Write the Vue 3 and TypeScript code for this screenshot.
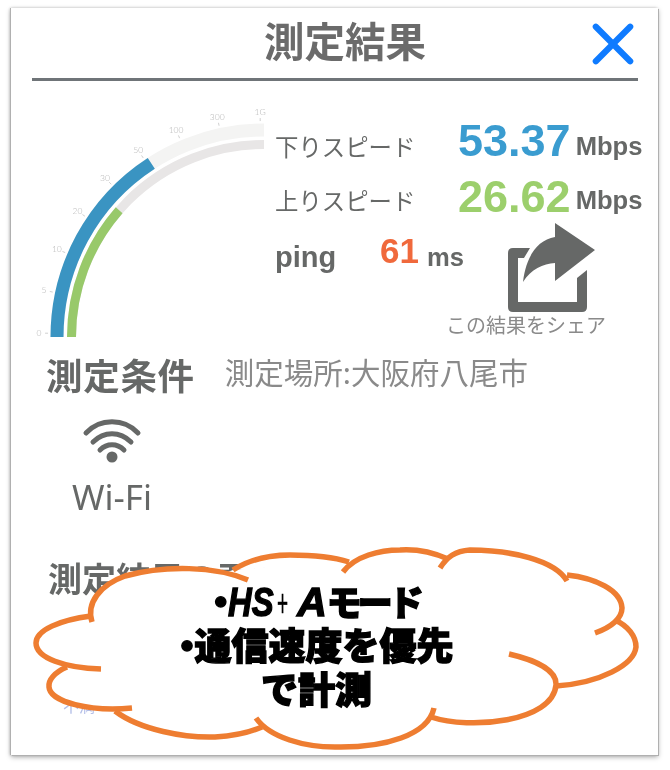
<template>
  <div class="page">
    <div class="card">
      <header class="head">
        <h1>測定結果</h1>
        <svg class="close" width="44" height="44" viewBox="0 0 44 44">
          <path d="M4 4 L40 40 M40 4 L4 40" stroke="#0f7bff" stroke-width="6.5" fill="none" stroke-linecap="round" />
        </svg>
      </header>

      <section class="top">
        <svg class="gauge" width="232" height="237" viewBox="0 0 232 237">
          <path :d="arc(207, 0, 90)" class="track-a" />
          <path :d="arc(192.5, 0, 90)" class="track-b" />
          <path :d="arc(207, 0, angleOf(53.37))" class="down" />
          <path :d="arc(192.5, 0, angleOf(26.62))" class="up" />
          <g v-for="(t, i) in ticks" :key="t">
            <line :x1="px(219, 1 + i * 11)" :y1="py(219, 1 + i * 11)" :x2="px(216, 1 + i * 11)" :y2="py(216, 1 + i * 11)" class="tick" />
            <text :x="px(225, 1 + i * 11)" :y="py(225, 1 + i * 11) + 3" class="tick-label">{{ t }}</text>
          </g>
        </svg>

        <div class="stats">
          <div class="row">
            <span class="label">下りスピード</span>
            <span class="num blue">53.37</span>
            <span class="unit">Mbps</span>
          </div>
          <div class="row second">
            <span class="label">上りスピード</span>
            <span class="num green">26.62</span>
            <span class="unit">Mbps</span>
          </div>
          <div class="row-ping">
            <div class="ping">
              <span class="ping-label">ping</span>
              <span class="ping-num">61</span>
              <span class="ping-unit">ms</span>
            </div>
            <div class="share">
              <svg width="92" height="92" viewBox="0 0 92 92">
                <path d="M25 25 H8 Q3 25 3 30 V84 Q3 89 8 89 H77 Q82 89 82 84 V47 L72 55 V79 H13 V35 H19 Z" fill="#666867" />
                <path d="M50 0 L90 27 L50 58 V40 C38 41 26 46 18 59 C21 34 32 17 50 14 Z" fill="#666867" />
              </svg>
              <span class="share-text">この結果をシェア</span>
            </div>
          </div>
        </div>
      </section>

      <section class="cond">
        <h2>測定条件</h2>
        <p>測定場所:大阪府八尾市</p>
      </section>

      <div class="wifi">
        <svg width="60" height="44" viewBox="0 0 60 44">
          <g fill="none" stroke="#666867" stroke-width="5" stroke-linecap="round">
            <path d="M4 14 C18 -1 42 -1 56 14" />
            <path d="M11 23 C22 12 38 12 49 23" />
            <path d="M18 31 C25 24 35 24 42 31" />
          </g>
          <circle cx="30" cy="38" r="5.5" fill="#666867" />
        </svg>
        <span>Wi-Fi</span>
      </div>

      <h2 class="summary">測定結果の要約</h2>
      <p class="faint">不満</p>

      <div class="cloud">
        <svg class="cloud-shape" width="647" height="747" viewBox="11 8 647 747">
          <polygon points="92,620 233,570 349,560 440,562 565,578 600,630 556,680 430,710 260,722 130,705 100,668" fill="#fff" />
          <path v-for="(d, i) in lobes" :key="'f' + i" :d="d" fill="#fff" />
          <path v-for="(d, i) in lobes" :key="'s' + i" :d="d" fill="none" stroke="#ee7d31" stroke-width="5.5" />
        </svg>
        <div class="cloud-text">
          <div><span class="dot">・</span><span class="hs">HS</span><span class="plus">+</span><span class="a">A</span><span class="mode">モード</span></div>
          <div><span class="dot">・</span>通信速度を優先</div>
          <div>で計測</div>
        </div>
      </div>
    </div>
  </div>
</template>

<script setup lang="ts">
const CX = 232
const CY = 237

const ticks = ['0', '5', '10', '20', '30', '50', '100', '300', '1G']
const stops = [0, 5, 10, 20, 30, 50, 100, 300, 1000]

const px = (r: number, deg: number) => CX - r * Math.cos((deg * Math.PI) / 180)
const py = (r: number, deg: number) => CY - r * Math.sin((deg * Math.PI) / 180)

const arc = (r: number, from: number, to: number) =>
  `M${px(r, from)} ${py(r, from)} A${r} ${r} 0 0 1 ${px(r, to)} ${py(r, to)}`

const angleOf = (v: number) => {
  for (let i = 1; i < stops.length; i++) {
    if (v <= stops[i]) {
      return (i - 1 + (v - stops[i - 1]) / (stops[i] - stops[i - 1])) * 11.25
    }
  }
  return 90
}

const lobes = [
  'M248 580 C215 566 165 565 125 576 C100 585 86 603 92 622',
  'M91 616 C60 620 36 630 36 643 C36 658 65 668 101 669',
  'M67 667 C55 672 48 680 49 687 C50 702 90 712 132 708',
  'M115 711 C140 730 185 738 215 737 C232 736 250 732 262 727',
  'M256 718 C270 738 305 747 335 747 C385 748 428 735 434 708',
  'M431 717 C470 730 553 722 556 685 C557 670 535 660 509 654',
  'M556 686 C600 683 634 665 636 647 C636 636 628 626 615 620',
  'M595 633 C612 627 622 618 622 608 C621 590 595 578 567 575',
  'M567 581 C555 560 510 550 470 550 C455 551 447 557 440 568',
  'M448 559 C430 551 415 549 400 550 C380 550 355 556 343 572',
  'M349 562 C330 556 310 555 290 555 C265 555 247 561 233 570',
]
</script>

<style scoped>
.page {
  width: 670px;
  height: 770px;
  padding: 8px 12px 15px 11px;
  box-sizing: border-box;
  font-family: "Noto Sans CJK JP", "Noto Sans", sans-serif;
  color: #666867;
  background: #fff;
}

.card {
  position: relative;
  height: 100%;
  box-sizing: border-box;
  padding: 0 20px 0 21px;
  background: #fff;
  filter: blur(0.4px);
  box-shadow: -1px 0 0 #b0b0b0, 1px 1px 0 #b0b0b0, 0 2px 5px rgba(0, 0, 0, 0.35), -1px 0 3px rgba(0, 0, 0, 0.2);
}

.head {
  display: flex;
  align-items: center;
  justify-content: center;
  position: relative;
  height: 70px;
  padding-left: 20px;
  border-bottom: 3px solid #6f7478;
  box-sizing: content-box;
}

h1 {
  margin: -6px 0 0;
  font-size: 40.5px;
  font-weight: 700;
  line-height: 70px;
  color: #6b6b6b;
}

.close {
  position: absolute;
  right: 4px;
  top: 15px;
  width: 42px;
  height: 42px;
}

.top {
  display: flex;
  gap: 11px;
  margin-top: 19px;
}

.gauge {
  flex: none;
  overflow: visible;
}

.gauge path {
  fill: none;
}

.track-a {
  stroke: #f4f4f3;
  stroke-width: 13;
}

.track-b {
  stroke: #e8e6e6;
  stroke-width: 9;
}

.down {
  stroke: #3a94c2;
  stroke-width: 13;
}

.up {
  stroke: #98c96a;
  stroke-width: 9;
}

.tick {
  stroke: #bbb;
  stroke-width: 0.7;
}

.tick-label {
  font-family: Lato, "Liberation Sans", sans-serif;
  font-size: 8.5px;
  font-weight: 300;
  fill: #b5b5b5;
  text-anchor: middle;
}

.stats {
  padding-top: 22px;
}

.row {
  display: flex;
  align-items: center;
  height: 48px;
}

.row.second {
  margin-top: 6px;
}

.label {
  width: 183px;
  font-size: 23.4px;
  line-height: 48px;
}

.num {
  font-family: "Liberation Sans", sans-serif;
  font-size: 45px;
  font-weight: 700;
  line-height: 48px;
  margin-top: -10px;
}

.second .num {
  margin-top: -7px;
}

.blue {
  color: #3a9cd0;
}

.green {
  color: #9ccf6c;
}

.unit {
  font-family: "Liberation Sans", sans-serif;
  font-size: 25.6px;
  font-weight: 700;
  margin-left: 5px;
}

.row-ping {
  display: flex;
}

.ping {
  display: flex;
  align-items: center;
  flex: none;
  height: 40px;
  margin-top: 13px;
  font-family: "Liberation Sans", sans-serif;
  font-weight: 700;
}

.ping-label {
  width: 105px;
  font-size: 29px;
}

.ping-num {
  font-size: 35px;
  color: #f0693c;
  margin-top: -12px;
}

.ping-unit {
  font-size: 25.6px;
  margin-left: 8px;
}

.share {
  display: flex;
  flex: none;
  flex-direction: column;
  align-items: center;
  margin: -1px 0 0 -18px;
  width: 160px;
}

.share svg {
  display: block;
  margin-left: 50px;
}

.share-text {
  font-size: 20px;
  line-height: 24px;
  margin-top: -2px;
  color: #8a8a8a;
}

.cond {
  display: flex;
  gap: 30px;
  margin: 15px 0 0 14px;
}

h2 {
  margin: 0;
  font-size: 36.5px;
  font-weight: 700;
  line-height: 46px;
  letter-spacing: 0.7px;
}

.cond p {
  margin: 1px 0 0;
  font-size: 29.5px;
  line-height: 36px;
  color: #8a8a8a;
}

.wifi {
  display: flex;
  flex-direction: column;
  align-items: center;
  width: 120px;
  margin: 21px 0 0 20px;
}

.wifi svg {
  display: block;
}

.wifi span {
  font-family: "Noto Sans", sans-serif;
  font-size: 35px;
  line-height: 40px;
  margin-top: 14px;
}

.summary {
  margin: 38px 0 0 16px;
  font-size: 34px;
  letter-spacing: 0;
}

.faint {
  margin: 94px 0 0 31px;
  font-size: 16px;
  line-height: 20px;
  color: #b4bfe8;
}

.cloud {
  position: absolute;
  inset: 0;
}

.cloud-shape {
  position: absolute;
  inset: 0;
}

.cloud-text {
  position: absolute;
  left: 0;
  right: 0;
  top: 570px;
  padding-right: 36px;
  text-align: center;
  font-size: 37px;
  font-weight: 900;
  line-height: 44px;
  color: #000;
  -webkit-text-stroke: 1.4px #000;
}

.cloud-text > div {
  height: 44px;
}

.dot {
  margin: 0 -11px;
}

.hs,
.a {
  display: inline-block;
  font-family: "Liberation Sans", sans-serif;
  font-size: 41px;
  font-style: italic;
  font-weight: 700;
}

.hs {
  width: 46px;
  transform: scaleX(0.8);
  transform-origin: left;
}

.plus {
  display: inline-block;
  width: 20px;
  margin-left: 3px;
  font-family: "Liberation Sans", sans-serif;
  font-size: 38px;
  font-weight: 400;
  transform: scaleX(0.5);
  transform-origin: left;
  -webkit-text-stroke: 0.4px #000;
}

.mode {
  font-size: 35px;
  letter-spacing: -4px;
}
</style>
